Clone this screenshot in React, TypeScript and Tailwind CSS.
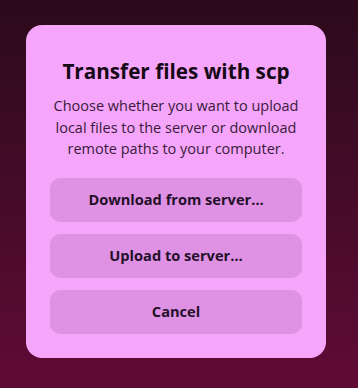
export default function App() {
  const buttons = ['Download from server…', 'Upload to server…', 'Cancel']

  return (
    <div
      className="flex h-[388px] w-[358px] items-start bg-gradient-to-b from-[#2c0a1c] to-[#600a36] pt-[25px] pl-[26px]"
      style={{ fontFamily: '"Open Sans", "Noto Sans", sans-serif' }}
    >
      <div className="flex w-[300px] flex-col rounded-[16px] bg-[#f5a6fa] px-6 pt-8 pb-6">
        <h1 className="text-center text-[20.7px] leading-[28px] font-bold text-[#170a17]">
          Transfer files with scp
        </h1>
        <p className="mt-[10px] text-center text-[14.5px] leading-[21.5px] text-[#3a1a3c]">
          Choose whether you want to upload local files to the server or download remote paths to
          your computer.
        </p>
        <div className="mt-[18px] flex flex-col gap-3">
          {buttons.map((label) => (
            <button
              key={label}
              type="button"
              className="h-11 rounded-[10px] bg-[#df92e3] text-[14.6px] font-bold text-[#24102a]"
            >
              {label}
            </button>
          ))}
        </div>
      </div>
    </div>
  )
}
